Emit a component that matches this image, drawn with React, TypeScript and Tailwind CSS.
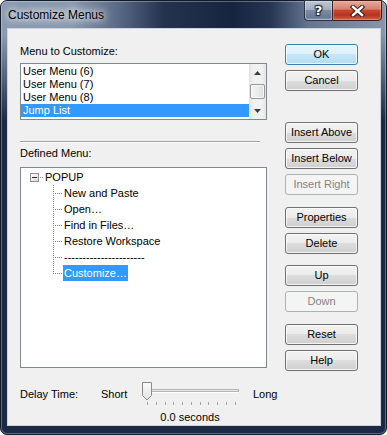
import React from "react";

type BtnKind = "normal" | "default" | "disabled";

function Btn({ label, kind = "normal", mt }: { label: string; kind?: BtnKind; mt: string }) {
  const base =
    "flex h-[21px] w-[73px] shrink-0 items-center justify-center rounded-[3px] border leading-[13px]";
  const look =
    kind === "default"
      ? "border-[#3c7fb1] bg-[linear-gradient(180deg,#e8f5fc_0%,#dcf0fb_50%,#c6e6f8_50%,#b3dbf2_100%)] shadow-[inset_0_0_0_1px_rgba(255,255,255,0.7)] text-black"
      : kind === "disabled"
      ? "border-[#adb2b5] bg-[#f4f4f4] text-[#838383]"
      : "border-[#707070] bg-[linear-gradient(180deg,#f2f2f2_0%,#ebebeb_50%,#dddddd_50%,#cfcfcf_100%)] shadow-[inset_0_0_0_1px_rgba(255,255,255,0.75)] text-black";
  return <div className={`${base} ${look} ${mt}`}>{label}</div>;
}

function ScrollBar() {
  return (
    <div className="flex h-full w-[17px] shrink-0 flex-col bg-[linear-gradient(90deg,#e2e2e2_0%,#f1f1f1_25%,#f1f1f1_75%,#e6e6e6_100%)]">
      <div className="flex h-[17px] items-center justify-center">
        <svg width="7" height="4" viewBox="0 0 7 4">
          <polygon points="3.5,0 7,4 0,4" fill="#3e3e3e" />
        </svg>
      </div>
      <div className="mx-px mt-[3px] h-[15px] w-[15px] rounded-[2px] border border-[#979797] bg-[linear-gradient(90deg,#f4f4f4_0%,#ececec_50%,#dcdcdc_100%)] shadow-[inset_0_0_0_1px_rgba(255,255,255,0.8)]" />
      <div className="flex-1" />
      <div className="flex h-[17px] items-center justify-center">
        <svg width="7" height="4" viewBox="0 0 7 4">
          <polygon points="0,0 7,0 3.5,4" fill="#3e3e3e" />
        </svg>
      </div>
    </div>
  );
}

function ChildRow({ label, last = false, selected = false }: { label: string; last?: boolean; selected?: boolean }) {
  return (
    <div className="flex h-[16px] items-center pl-[32px]">
      <svg width="10" height="16" viewBox="0 0 10 16" shapeRendering="crispEdges" className="shrink-0">
        <line x1="0.5" y1="0" x2="0.5" y2={last ? 9 : 16} stroke="#8a8a8a" strokeDasharray="1 1" />
        <line x1="1" y1="8.5" x2="10" y2="8.5" stroke="#8a8a8a" strokeDasharray="1 1" strokeDashoffset="1" />
      </svg>
      <span
        className={
          selected
            ? "h-[16px] bg-[#3399ff] px-px leading-[16px] text-white"
            : "h-[16px] px-px leading-[16px] text-black"
        }
      >
        {label}
      </span>
    </div>
  );
}

export default function App() {
  const ticks = Array.from({ length: 11 }, (_, i) => Math.round(7 + i * 8.75));
  return (
    <div className="h-[435px] w-[387px] bg-white font-['Liberation_Sans',Arial,sans-serif] text-[11px] leading-[13px] text-black">
      <div className="flex h-full w-full flex-col rounded-[7px] border border-[#111a2b] bg-[linear-gradient(180deg,rgba(28,42,70,0)_0px,rgba(28,42,70,0)_34px,#1c2a46_120px),linear-gradient(90deg,#8a9ab0_0%,#8999ae_18%,#5c6b87_30%,#25334f_42%,#17243f_60%,#263553_70%,#66758f_80%,#8896aa_100%)] shadow-[inset_0_0_0_1px_rgba(255,255,255,0.3)]">
        {/* Title bar */}
        <div className="flex h-[27px] shrink-0 items-start">
          <div className="ml-[7px] mt-[7px] text-[12px] leading-[14px] text-black [text-shadow:0_0_6px_#ffffff,0_0_10px_rgba(255,255,255,0.9),0_0_14px_rgba(255,255,255,0.6)]">
            Customize Menus
          </div>
          <div className="flex-1" />
          <div className="mr-[4px] -mt-px flex h-[21px]">
            <div className="flex w-[28px] items-center justify-center rounded-bl-[4px] border border-r-0 border-[#2a3346] bg-[linear-gradient(180deg,#bcc6d3_0%,#a2aec0_45%,#7d8ba2_50%,#6a7a93_85%,#8595ad_100%)] shadow-[inset_0_0_0_1px_rgba(255,255,255,0.35)]">
              <span className="font-['DejaVu_Sans',sans-serif] text-[13px] font-bold leading-[13px] text-white [text-shadow:0_0_1px_#1d2433,1px_1px_1px_#1d2433,-1px_-1px_1px_#1d2433,1px_-1px_1px_#1d2433,-1px_1px_1px_#1d2433]">
                ?
              </span>
            </div>
            <div className="flex w-[50px] items-center justify-center rounded-br-[4px] border border-[#3b1d1a] bg-[linear-gradient(180deg,#e7a898_0%,#d8826f_42%,#c4462f_50%,#b9331d_75%,#d36246_100%)] shadow-[inset_0_0_0_1px_rgba(255,210,200,0.35)]">
              <svg width="15" height="12" viewBox="0 0 15 12">
                <path d="M3 2 L12 10 M12 2 L3 10" stroke="#3a1a16" strokeWidth="4.4" strokeLinecap="square" />
                <path d="M3 2 L12 10 M12 2 L3 10" stroke="#ffffff" strokeWidth="2.4" strokeLinecap="square" />
              </svg>
            </div>
          </div>
        </div>

        {/* Client area */}
        <div className="ml-[6px] mr-[5px] mb-[8px] flex h-[398px] border border-[#cdd5df] bg-[#f0f0f0]">
          {/* Left column */}
          <div className="ml-[12px] flex w-[247px] shrink-0 flex-col">
            <div className="mt-[16px] h-[13px]">Menu to Customize:</div>
            <div className="mt-[5px] flex h-[57px] border border-[#828790] bg-white">
              <div className="flex min-w-0 flex-1 flex-col pt-px">
                <div className="h-[13px] pl-[2px]">User Menu (6)</div>
                <div className="h-[13px] pl-[2px]">User Menu (7)</div>
                <div className="h-[13px] pl-[2px]">User Menu (8)</div>
                <div className="h-[13px] bg-[#3399ff] pl-[2px] text-white">Jump List</div>
              </div>
              <ScrollBar />
            </div>
            <div className="mt-[21px] h-[2px] w-[240px] border-t border-b border-t-[#a0a0a0] border-b-white" />
            <div className="mt-[4px] h-[13px]">Defined Menu:</div>
            <div className="mt-[7px] flex h-[201px] flex-col border border-[#828790] bg-white pt-px">
              <div className="flex h-[16px] items-center pl-[9px]">
                <svg width="15" height="16" viewBox="0 0 15 16" shapeRendering="crispEdges" className="shrink-0">
                  <defs>
                    <linearGradient id="bx" x1="0" y1="0" x2="1" y2="1">
                      <stop offset="0" stopColor="#ffffff" />
                      <stop offset="1" stopColor="#d9d9d9" />
                    </linearGradient>
                  </defs>
                  <rect x="0.5" y="4.5" width="8" height="8" fill="url(#bx)" stroke="#919191" />
                  <line x1="2" y1="8.5" x2="7" y2="8.5" stroke="#2b2b2b" />
                  <line x1="9" y1="8.5" x2="14" y2="8.5" stroke="#8a8a8a" strokeDasharray="1 1" strokeDashoffset="1" />
                </svg>
                <span className="leading-[16px]">POPUP</span>
              </div>
              <ChildRow label="New and Paste" />
              <ChildRow label="Open…" />
              <ChildRow label="Find in Files…" />
              <ChildRow label="Restore Workspace" />
              <ChildRow label="----------------------" />
              <ChildRow label="Customize…" last selected />
            </div>
            {/* Delay row */}
            <div className="mt-[14px] flex items-start">
              <div className="mt-[6px] w-[81px] shrink-0">Delay Time:</div>
              <div className="mt-[6px] w-[39px] shrink-0">Short</div>
              <div className="flex w-[100px] shrink-0 flex-col items-center">
                <svg width="100" height="24" viewBox="0 0 100 24" className="block">
                  <defs>
                    <linearGradient id="th" x1="0" y1="0" x2="0" y2="1">
                      <stop offset="0" stopColor="#fbfbfb" />
                      <stop offset="1" stopColor="#e1e1e1" />
                    </linearGradient>
                  </defs>
                  <rect x="3.5" y="7.5" width="95" height="2" fill="#e8eaea" stroke="#b2b2b2" shapeRendering="crispEdges" />
                  <line x1="4" y1="10.5" x2="99" y2="10.5" stroke="#ffffff" shapeRendering="crispEdges" />
                  <polygon points="2.5,0.5 11.5,0.5 11.5,13.5 7,18 2.5,13.5" fill="url(#th)" stroke="#8b8b8b" />
                  {ticks.map((x) => (
                    <rect key={x} x={x} y={20} width={1} height={3} fill="#a6a6a6" />
                  ))}
                </svg>
                <div className="mt-[5px]">0.0 seconds</div>
              </div>
              <div className="ml-[13px] mt-[6px]">Long</div>
            </div>
          </div>

          {/* Right column */}
          <div className="ml-[18px] flex w-[73px] shrink-0 flex-col">
            <Btn label="OK" kind="default" mt="mt-[15px]" />
            <Btn label="Cancel" mt="mt-[5px]" />
            <Btn label="Insert Above" mt="mt-[31px]" />
            <Btn label="Insert Below" mt="mt-[5px]" />
            <Btn label="Insert Right" kind="disabled" mt="mt-[5px]" />
            <Btn label="Properties" mt="mt-[12px]" />
            <Btn label="Delete" mt="mt-[5px]" />
            <Btn label="Up" mt="mt-[11px]" />
            <Btn label="Down" kind="disabled" mt="mt-[5px]" />
            <Btn label="Reset" mt="mt-[12px]" />
            <Btn label="Help" mt="mt-[5px]" />
          </div>
        </div>
      </div>
    </div>
  );
}
